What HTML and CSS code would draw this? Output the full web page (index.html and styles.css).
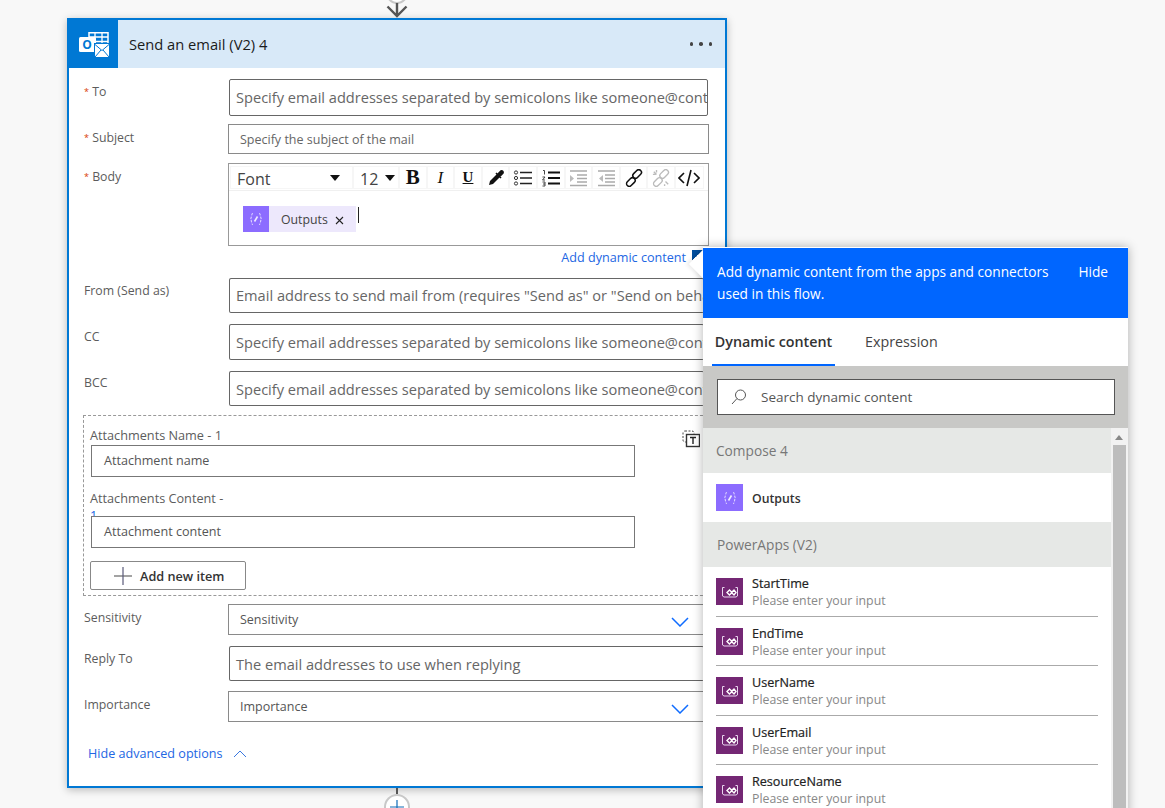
FILE: index.html
```html
<!DOCTYPE html>
<html lang="en">
<head>
<meta charset="utf-8">
<title>Send an email (V2) 4</title>
<link rel="stylesheet" href="styles.css">
</head>
<body>
<div class="canvas">
  <div class="connector-top">
    <svg width="24" height="18" viewBox="0 0 24 18"><circle cx="12" cy="-7" r="10" fill="#fff" stroke="#c8c8c8" stroke-width="2"/><path d="M12 3V16M2.500 6.500L12 16l9.500-9.500" fill="none" stroke="#555" stroke-width="2.400"/></svg>
  </div>
  <section class="card">
    <header class="card-head">
      <div class="head-icon">
        <svg width="30" height="25" viewBox="0 0 30 25"><path d="M10 .800H29V14H10z" fill="none" stroke="#fff" stroke-width="1.500"/><path d="M16 1V12M23 1V14M10 5H29M10 9.500H29" stroke="#fff" stroke-width="1.300"/><rect x="0" y="5" width="17" height="15" rx="1.500" fill="#fff"/><text x="8" y="17" class="o-letter" text-anchor="middle">O</text><path d="M15 11H30V25H15z" fill="#0078d4"/><path d="M16 12H30V25H16z" fill="#fff"/><path d="M16 12.500l7 6 7-6M16 25l6-7M30 25l-6-7" fill="none" stroke="#0078d4" stroke-width="1"/></svg>
      </div>
      <h1 class="head-title">Send an email (V2) 4</h1>
      <div class="head-more"><i></i><i></i><i></i></div>
    </header>
    <div class="form">
      <div class="row row-to">
        <label class="lab"><span class="req">*</span> To</label>
        <div class="field big f-479">Specify email addresses separated by semicolons like someone@contoso.com</div>
      </div>
      <div class="row row-subject">
        <label class="lab"><span class="req">*</span> Subject</label>
        <div class="field small f-481">Specify the subject of the mail</div>
      </div>
      <div class="row row-body">
        <label class="lab"><span class="req">*</span> Body</label>
        <div class="editor">
          <div class="toolbar">
            <div class="tool tool-font">Font<b class="caret"></b></div>
            <div class="tool tool-size">12<b class="caret"></b></div>
            <div class="tool"><span class="t-b">B</span></div>
            <div class="tool"><span class="t-i">I</span></div>
            <div class="tool"><span class="t-u">U</span></div>
            <div class="tool"><svg width="18" height="18" viewBox="0 0 18 18"><path d="M2 16l1-4 7-7 3 3-7 7z" fill="#111"/><path d="M9 4l5 5M11 5l3-3a1.500 1.500 0 0 1 2 2l-3 3z" stroke="#111" stroke-width="1.600" fill="#111"/></svg></div>
            <div class="tool"><svg width="20" height="18" viewBox="0 0 20 18"><g fill="none" stroke="#333"><circle cx="3" cy="3.500" r="1.600"/><circle cx="3" cy="9" r="1.600"/><circle cx="3" cy="14.500" r="1.600"/></g><path d="M7 3.500H19M7 9H19M7 14.500H19" stroke="#222" stroke-width="1.500"/></svg></div>
            <div class="tool"><svg width="20" height="18" viewBox="0 0 20 18"><path d="M2 1.500h1.500v4M1.500 8h2.500l-2.500 3h2.500M1.500 13h2.500v4h-2.500M2 15h2" fill="none" stroke="#333" stroke-width=".9"/><path d="M7 3.500H19M7 9H19M7 14.500H19" stroke="#111" stroke-width="2"/></svg></div>
            <div class="tool"><svg width="20" height="18" viewBox="0 0 20 18"><path d="M2 2H19M9 6H19M9 9.500H19M9 13H19M2 16.500H19" stroke="#aaa" stroke-width="1.300"/><path d="M2 6l4 3.500-4 3.500z" fill="#bbb"/></svg></div>
            <div class="tool"><svg width="20" height="18" viewBox="0 0 20 18"><path d="M2 2H19M9 6H19M9 9.500H19M9 13H19M2 16.500H19" stroke="#aaa" stroke-width="1.300"/><path d="M7 6l-4 3.500 4 3.500z" fill="#bbb"/></svg></div>
            <div class="tool"><svg width="18" height="18" viewBox="0 0 20 20"><g fill="none" stroke="#111" stroke-width="1.700"><rect x="10.500" y="0" width="6" height="11" rx="3" transform="rotate(45 13.500 5.500)"/><rect x="3.500" y="9" width="6" height="11" rx="3" transform="rotate(45 6.500 14.500)"/></g></svg></div>
            <div class="tool"><svg width="18" height="18" viewBox="0 0 20 20"><g fill="none" stroke="#bbb" stroke-width="1.500"><rect x="10.500" y="0" width="6" height="11" rx="3" transform="rotate(45 13.500 5.500)"/><rect x="3.500" y="9" width="6" height="11" rx="3" transform="rotate(45 6.500 14.500)"/><path d="M2 3l3 3M5 1v3M1 6h3M15 14l3 3M14 17v2"/></g></svg></div>
            <div class="tool tool-code"><svg width="22" height="18" viewBox="0 0 22 18"><path d="M6 4L1 9l5 5M16 4l5 5-5 5M13 1L9 17" fill="none" stroke="#111" stroke-width="1.600"/></svg></div>
          </div>
          <div class="editor-body">
            <span class="token">
              <span class="token-icon"><svg class="fx" viewBox="0 0 16 16"><path d="M5 2.500c-2 0-1 4-2.500 5.500C4 9.500 3 13.500 5 13.500M11 2.500c2 0 1 4 2.500 5.500-1.500 1.500-.5 5.500-2.500 5.500" fill="none" stroke="#dcd2ff" stroke-width="1.100" stroke-dasharray="2.500 1.200"/><path d="M6.500 10.500L9.500 5.500" fill="none" stroke="#f0ebff" stroke-width="1.600"/></svg></span>
              <span class="token-text">Outputs</span>
              <svg class="token-x" width="9" height="9" viewBox="0 0 9 9"><path d="M1 1l7 7M8 1L1 8" stroke="#222" stroke-width="1.100"/></svg>
            </span>
            <span class="cursor"></span>
          </div>
        </div>
      </div>
      <div class="dyn-row"><a class="link">Add dynamic content</a><span class="dyn-corner"></span></div>
      <div class="row row-from">
        <label class="lab">From (Send as)</label>
        <div class="field big f-wide">Email address to send mail from (requires "Send as" or "Send on behalf of" permission)</div>
      </div>
      <div class="row row-cc">
        <label class="lab">CC</label>
        <div class="field big f-wide">Specify email addresses separated by semicolons like someone@contoso.com</div>
      </div>
      <div class="row row-bcc">
        <label class="lab">BCC</label>
        <div class="field big f-wide">Specify email addresses separated by semicolons like someone@contoso.com</div>
      </div>
      <div class="attach">
        <div class="attach-del"><svg width="18" height="18" viewBox="0 0 18 18"><rect x="1" y="1" width="11" height="11" rx="2" fill="none" stroke="#444" stroke-dasharray="2 1.500"/><rect x="4.500" y="4.500" width="13" height="12" fill="#fff" stroke="#333" stroke-width="1.400"/><path d="M8 7.500h6M11 7.500v6.500" stroke="#222" stroke-width="1.400"/></svg></div>
        <div class="attach-lab lab-one">Attachments Name - 1</div>
        <div class="attach-field">Attachment name</div>
        <div class="attach-lab lab-two">Attachments Content -<br><span class="wrapped">1</span></div>
        <div class="attach-field">Attachment content</div>
        <button class="add-btn"><svg width="18" height="18" viewBox="0 0 18 18"><path d="M0 9H18" stroke="#666" stroke-width="1.200"/><path d="M9 0V18" stroke="#5a5a7a" stroke-width="1.200"/></svg><span>Add new item</span></button>
      </div>
      <div class="row row-sens">
        <label class="lab">Sensitivity</label>
        <div class="field select f-wide">Sensitivity<svg class="chev" width="18" height="10" viewBox="0 0 18 10"><path d="M1 1l8 8 8-8" fill="none" stroke="#0f6cff" stroke-width="1.500"/></svg></div>
      </div>
      <div class="row row-reply">
        <label class="lab">Reply To</label>
        <div class="field big f-wide">The email addresses to use when replying</div>
      </div>
      <div class="row row-imp">
        <label class="lab">Importance</label>
        <div class="field select f-wide">Importance<svg class="chev" width="18" height="10" viewBox="0 0 18 10"><path d="M1 1l8 8 8-8" fill="none" stroke="#0f6cff" stroke-width="1.500"/></svg></div>
      </div>
      <div class="advanced"><a class="link">Hide advanced options</a><svg width="14" height="8" viewBox="0 0 14 8"><path d="M1 7l6-6 6 6" fill="none" stroke="#3a78e0" stroke-width="1"/></svg></div>
    </div>
  </section>
  <div class="connector-bottom">
    <span class="stem"></span>
    <span class="plus-circle"><svg width="14" height="14" viewBox="0 0 14 14"><path d="M0 7H14M7 0V14" stroke="#0f6cb8" stroke-width="1.200"/></svg></span>
  </div>

  <aside class="panel">
    <span class="beak"></span>
    <div class="panel-head">
      <p class="panel-msg">Add dynamic content from the apps and connectors used in this flow.</p>
      <a class="panel-hide">Hide</a>
    </div>
    <nav class="tabs">
      <a class="tab tab-on">Dynamic content</a>
      <a class="tab tab-expr">Expression</a>
    </nav>
    <div class="search-band">
      <div class="search">
        <svg width="18" height="18" viewBox="0 0 18 18"><circle cx="10.500" cy="7" r="5" fill="none" stroke="#555" stroke-width="1"/><path d="M7 10.500L2 16" stroke="#555" stroke-width="1"/></svg>
        <span>Search dynamic content</span>
      </div>
    </div>
    <div class="list-wrap">
      <div class="list">
        <div class="group">Compose 4</div>
        <div class="item item-solo">
          <span class="ico ico-fx"><svg class="fx" viewBox="0 0 16 16"><path d="M5 2.500c-2 0-1 4-2.500 5.500C4 9.500 3 13.500 5 13.500M11 2.500c2 0 1 4 2.500 5.500-1.500 1.500-.5 5.500-2.500 5.500" fill="none" stroke="#dcd2ff" stroke-width="1.100" stroke-dasharray="2.500 1.200"/><path d="M6.500 10.500L9.500 5.500" fill="none" stroke="#f0ebff" stroke-width="1.600"/></svg></span>
          <span class="item-name">Outputs</span>
        </div>
        <div class="group group-2">PowerApps (V2)</div>
        <div class="item"><span class="ico ico-pa"><svg class="pa" viewBox="0 0 18 12"><use href="#pa-glyph"/></svg></span><div class="item-text"><span class="item-name">StartTime</span><span class="item-desc">Please enter your input</span></div></div>
        <div class="item"><span class="ico ico-pa"><svg class="pa" viewBox="0 0 18 12"><use href="#pa-glyph"/></svg></span><div class="item-text"><span class="item-name">EndTime</span><span class="item-desc">Please enter your input</span></div></div>
        <div class="item"><span class="ico ico-pa"><svg class="pa" viewBox="0 0 18 12"><use href="#pa-glyph"/></svg></span><div class="item-text"><span class="item-name">UserName</span><span class="item-desc">Please enter your input</span></div></div>
        <div class="item"><span class="ico ico-pa"><svg class="pa" viewBox="0 0 18 12"><use href="#pa-glyph"/></svg></span><div class="item-text"><span class="item-name">UserEmail</span><span class="item-desc">Please enter your input</span></div></div>
        <div class="item"><span class="ico ico-pa"><svg class="pa" viewBox="0 0 18 12"><use href="#pa-glyph"/></svg></span><div class="item-text"><span class="item-name">ResourceName</span><span class="item-desc">Please enter your input</span></div></div>
      </div>
      <div class="scrollbar"><span class="sb-up"></span><span class="sb-thumb"></span></div>
    </div>
  </aside>
  <svg class="defs" width="0" height="0"><defs><g id="pa-glyph"><path d="M3.500 1.500H1.500v8.500l1.500 1h12l1.500-1V1.500h-2" fill="none" stroke="#e8d6ee" stroke-width="1"/><path d="M6 6.500l2.500-2.500L11 6.500 8.500 9zM10.500 6.500L13 4l2 2.500L13 9z" fill="none" stroke="#fff" stroke-width="1.400"/></g></defs></svg>
</div>
</body>
</html>
```
FILE: styles.css
```css
* { box-sizing: border-box; }
html, body { margin: 0; height: 808px; overflow: hidden; }
body { background: #f8f8f8; font-family: "Open Sans", "Noto Sans", sans-serif; color: #333; }
.canvas { position: relative; width: 1165px; height: 808px; overflow: hidden; padding-left: 67px; }
.defs { position: absolute; }

.connector-top { height: 18px; width: 660px; display: flex; justify-content: center; }
.card { width: 660px; height: 770px; border: 2px solid #0078d4; background: #fff; box-shadow: 0 2px 8px rgba(0,0,0,.25); }
.card-head { height: 48px; background: #d8e9f8; display: flex; align-items: center; }
.head-icon { width: 49px; height: 48px; background: #0078d4; display: flex; align-items: center; justify-content: center; }
.o-letter { font-size: 12px; font-weight: 700; fill: #0078d4; font-family: "Open Sans", sans-serif; }
.head-title { margin: 0 0 0 11px; font-size: 14.7px; font-weight: 400; color: #1b1b1b; flex: 1; }
.head-more { display: flex; gap: 6px; margin-right: 13px; }
.head-more i { width: 3.500px; height: 3.500px; background: #444; border-radius: 50%; }

.form { padding: 11px 0 0 15px; }
.row { display: flex; }
.lab { width: 144px; flex: none; font-size: 12.3px; color: #5c5c5c; line-height: 16px; padding-top: 5px; }
.req { color: #d83b01; font-size: 9px; vertical-align: 1px; }
.field { border: 1px solid #666; background: #fff; white-space: nowrap; overflow: hidden; border-radius: 2px; display: flex; align-items: center; color: #666; flex: none; }
.big { font-size: 14.6px; padding-left: 6px; margin-left: 1px; }
.row-to .big, .row-from .big { padding-bottom: 1px; }
.small, .select { font-size: 12.5px; padding-left: 11px; border-color: #8a8a8a; border-radius: 0; }
.small { padding-top: 1px; }
.f-479 { width: 479px; }
.f-481 { width: 481px; }
.f-wide { width: 481px; }
.big.f-wide { width: 475px; border-right-color: transparent; }
.select { position: relative; color: #555; }
.chev { position: absolute; right: 19px; top: 12px; }

.row-to { height: 37px; margin-bottom: 8px; }
.row-subject { height: 30px; margin-bottom: 9px; }
.row-subject .lab, .row-body .lab, .row-sens .lab, .row-imp .lab { padding-top: 6px; }
.row-body { height: 83px; }
.row-from { height: 35px; margin-bottom: 11px; }
.row-cc { height: 36px; margin-bottom: 11px; }
.row-bcc { height: 35px; margin-bottom: 9px; }
.row-bcc .lab { padding-top: 4px; }
.row-sens { height: 31px; margin-bottom: 11px; margin-top: 8px; }
.row-reply { height: 35px; margin-bottom: 10px; }
.row-imp { height: 31px; }

.editor { width: 481px; border: 1px solid #999; background: #fff; }
.toolbar { height: 27px; border-bottom: 1px solid #f0f0f0; display: flex; gap: 2px; padding: 3px 0 0 2px; }
.tool { width: 25.600px; height: 21px; display: flex; align-items: center; justify-content: center; color: #111; box-shadow: 0 0 0 1px #f6f6f6; background: #fff; }
.tool-font { width: 121px; justify-content: flex-start; padding: 2px 0 0 6px; font-size: 16px; position: relative; color: #444; }
.tool-size { width: 44px; justify-content: flex-start; padding: 2px 0 0 6px; font-size: 16px; position: relative; color: #444; }
.tool-code { width: 27px; }
.caret { width: 0; height: 0; border: 5.500px solid transparent; border-top: 6px solid #111; border-bottom: 0; position: absolute; }
.tool-font .caret { right: 12px; top: 8px; }
.tool-size .caret { right: 3px; top: 8px; }
.t-b { font: 700 21px "Liberation Serif", serif; }
.t-i { font: italic 400 17px "Liberation Serif", serif; }
.t-u { font: 700 15px "Liberation Serif", serif; text-decoration: underline; }
.editor-body { display: flex; padding: 15px 0 0 14px; }
.token { display: flex; align-items: center; width: 113px; height: 26px; background: #ede8fc; }
.token-icon { width: 26px; height: 26px; background: #8c6cff; display: flex; align-items: center; justify-content: center; }
.fx { width: 16px; height: 16px; }
.token-text { margin-left: 12px; font-size: 12.3px; color: #444; }
.token-x { margin-left: 7px; margin-top: 3px; }
.cursor { width: 1px; height: 16px; background: #222; margin: 1px 0 0 2px; }

.dyn-row { height: 32px; width: 619px; display: flex; justify-content: flex-end; align-items: flex-start; padding-top: 4px; }
.link { color: #2266e3; font-size: 12.6px; line-height: 16px; }
.dyn-corner { width: 11px; height: 11px; margin: 0 0 0 6px; background: linear-gradient(135deg, #004f9f 50%, transparent 50%); }

.attach { position: relative; width: 640px; height: 181px; border: 1px dashed #999; padding: 11px 0 0 6px; margin-left: -1px; }
.attach-lab { font-size: 12.7px; line-height: 16px; color: #5c5c5c; height: 17px; }
.lab-one { height: 18px; }
.lab-two { margin-top: 13px; height: 26px; width: 150px; }
.wrapped { color: #2266e3; position: relative; top: 1px; }
.attach-field { position: relative; margin-left: 1px; width: 544px; height: 32px; border: 1px solid #777; background: #fff; font-size: 12.6px; padding: 0 0 1px 12px; display: flex; align-items: center; color: #555; }
.attach-del { position: absolute; left: 598px; top: 14px; line-height: 0; }
.add-btn { display: flex; align-items: center; margin: 13px 0 0 0; width: 156px; height: 29px; border: 1px solid #888; border-radius: 2px; background: #fff; padding: 0 0 0 23px; font: 600 12.7px "Open Sans", sans-serif; color: #333; gap: 8px; }

.advanced { display: flex; align-items: center; gap: 10px; margin: 24px 0 0 4px; height: 16px; }

.connector-bottom { width: 660px; display: flex; flex-direction: column; align-items: center; }
.stem { width: 2px; height: 6px; background: #555; }
.plus-circle { width: 26px; height: 26px; border-radius: 50%; border: 2px solid #c8c8c8; background: #fff; display: flex; align-items: center; justify-content: center; flex: none; }

.panel { position: absolute; left: 703px; top: 247px; width: 425px; height: 580px; background: #fff; box-shadow: 0 0 10px rgba(0,0,0,.3); border-top: 1px solid #fff; }
.beak { position: absolute; left: -10px; top: 6px; width: 20px; height: 20px; background: #fff; transform: rotate(45deg); box-shadow: -2px 2px 4px rgba(0,0,0,.08); }
.panel-head { position: relative; height: 70px; background: #0066ff; color: #fff; display: flex; padding: 13px 20px 0 14px; font-size: 13.7px; line-height: 22px; }
.panel-msg { margin: 0; width: 350px; }
.panel-hide { margin-left: 12px; white-space: nowrap; font-size: 13.7px; }
.tabs { position: relative; height: 48px; display: flex; background: #fff; padding-left: 9px; }
.tab { font-size: 14.3px; color: #444; padding-top: 14px; height: 48px; }
.tab-on { width: 123px; text-align: center; font-weight: 600; color: #333; border-bottom: 2px solid #0066ff; }
.tab-expr { margin-left: 30px; }
.search-band { height: 62px; background: #c8c8c6; padding: 13px 13px 0 14px; }
.search { height: 36px; width: 398px; border: 1px solid #555; background: #fff; display: flex; align-items: center; padding-left: 12px; gap: 13px; font-size: 13.5px; color: #555; }
.list-wrap { position: relative; height: 400px; display: flex; }
.list { width: 408px; flex: none; }
.group { height: 45px; background: #e6e8e6; padding: 14px 0 0 13px; font-size: 13.7px; line-height: 18px; color: #777; }
.group-2 { padding-left: 14px; }
.item { height: 49.500px; display: flex; padding: 12px 13px 0 13px; position: relative; }
.item-solo { height: 49px; padding-top: 11px; align-items: flex-start; }
.item-solo .item-name { margin-top: 7px; }
.item:not(.item-solo)::before { content: ""; position: absolute; left: 13px; right: 13px; bottom: 0; height: 1px; background: #aaa; }
.ico { width: 27px; height: 27px; margin-right: 9px; flex: none; display: flex; align-items: center; justify-content: center; }
.ico-fx { background: #8c6cff; }
.ico-pa { background: #742774; margin-top: -1px; }
.pa { width: 18px; height: 12px; }
.item-text { display: flex; flex-direction: column; margin-top: -3px; }
.item-name { font-size: 12.3px; font-weight: 600; color: #333; line-height: 16px; }
.item-text .item-name { font-size: 12.6px; font-weight: 400; color: #222; -webkit-text-stroke: .2px #222; }
.item-desc { font-size: 12.3px; color: #888; line-height: 17px; }
.scrollbar { width: 17px; background: #f2f2f2; position: relative; }
.sb-up { position: absolute; left: 4px; top: 7px; border: 4px solid transparent; border-bottom: 5px solid #888; border-top: 0; }
.sb-thumb { position: absolute; left: 2px; right: 2px; top: 17px; height: 400px; background: #bdbdbd; }
```
